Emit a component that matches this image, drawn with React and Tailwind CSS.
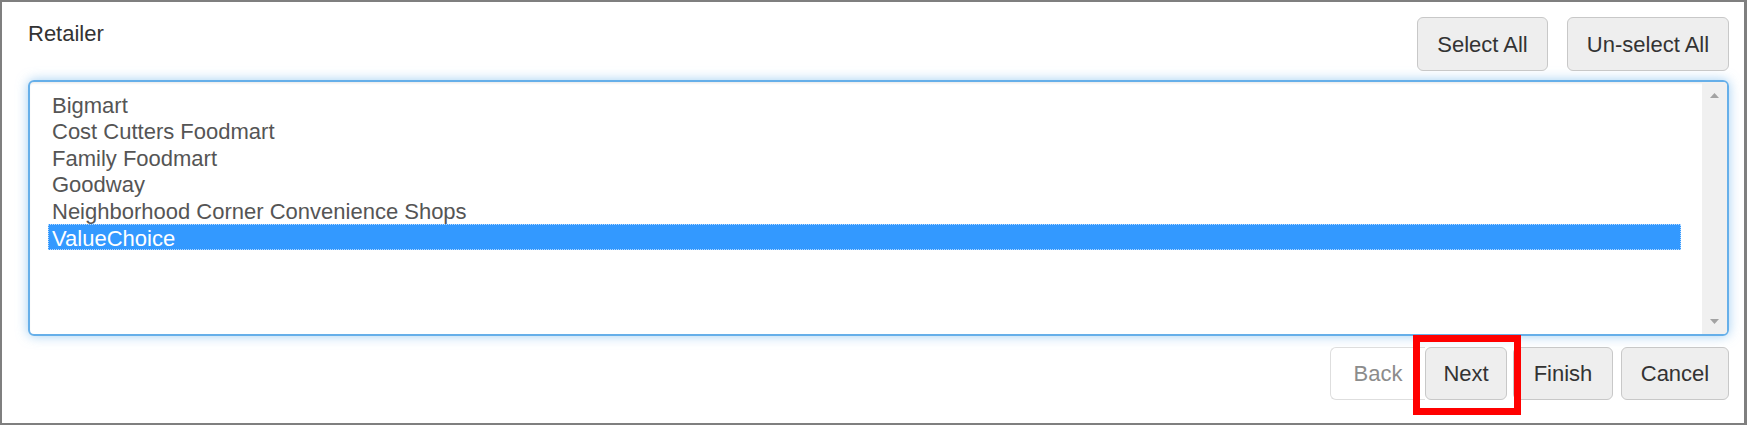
import { useState } from 'react';

const retailers = [
  'Bigmart',
  'Cost Cutters Foodmart',
  'Family Foodmart',
  'Goodway',
  'Neighborhood Corner Convenience Shops',
  'ValueChoice',
];

function Button({ className = '', children, ...props }) {
  return (
    <button
      className={`h-[53px] rounded-[6px] border border-[#c8c8c8] bg-[#eeeeee] text-[#333] flex items-center justify-center ${className}`}
      {...props}
    >
      {children}
    </button>
  );
}

function App() {
  const [selected, setSelected] = useState('ValueChoice');

  return (
    <div className="w-[1747px] h-[425px] box-border bg-white border-[#7f7f7f] border-t-2 border-l-2 border-b-2 border-r-[3px] pt-[15px] pl-[26px] pr-[15px] font-['Liberation_Sans',Arial,sans-serif] text-[22px] text-[#333]">
      <div className="flex items-start justify-between">
        <label className="mt-[2px] leading-[30px]">Retailer</label>
        <div className="flex gap-[19px]">
          <Button className="w-[131px] h-[54px]">Select All</Button>
          <Button className="w-[162px] h-[54px]">Un-select All</Button>
        </div>
      </div>

      {/* list box */}
      <div className="mt-[9px] h-[256px] flex overflow-hidden rounded-[6px] border-2 border-[#66afe9] shadow-[inset_0_1.5px_1.5px_rgba(0,0,0,0.075),0_0_12px_rgba(102,175,233,0.6)]">
        <div className="flex-1 pt-[8.5px] pl-[18px] pr-[21px]">
          {retailers.map((r) => (
            <div
              key={r}
              onClick={() => setSelected(r)}
              className={`h-[26.67px] pt-[3px] leading-[23.67px] pl-[4px] cursor-default ${
                selected === r
                  ? 'bg-[#3399ff] text-white outline-1 outline-dotted outline-[#b5d9ff] -outline-offset-1'
                  : 'text-[#555]'
              }`}
            >
              {r}
            </div>
          ))}
        </div>
        <div className="w-[25px] bg-[#f0f0f0] flex flex-col items-center justify-between pt-[11px] pb-[10px]">
          <svg width="9" height="5" viewBox="0 0 9 5">
            <polygon points="0,5 4.5,0 9,5" fill="#a3a3a3" />
          </svg>
          <svg width="9" height="5" viewBox="0 0 9 5">
            <polygon points="0,0 9,0 4.5,5" fill="#a3a3a3" />
          </svg>
        </div>
      </div>

      {/* wizard buttons */}
      <div className="mt-[11px] flex justify-end">
        <button className="h-[53px] w-[95px] rounded-l-[6px] border border-r-0 border-[#dedede] bg-white text-[#8c8c8c] flex items-center justify-center">
          Back
        </button>
        <div className="relative">
          <Button className="w-[82px]">Next</Button>
          <div className="absolute -left-[12px] -top-[12px] -right-[14px] -bottom-[15px] border-[7px] border-[#ff0000] pointer-events-none z-10" />
        </div>
        <Button className="w-[100px] ml-[6px]">Finish</Button>
        <Button className="w-[108px] ml-[8px]">Cancel</Button>
      </div>
    </div>
  );
}

export default App;
